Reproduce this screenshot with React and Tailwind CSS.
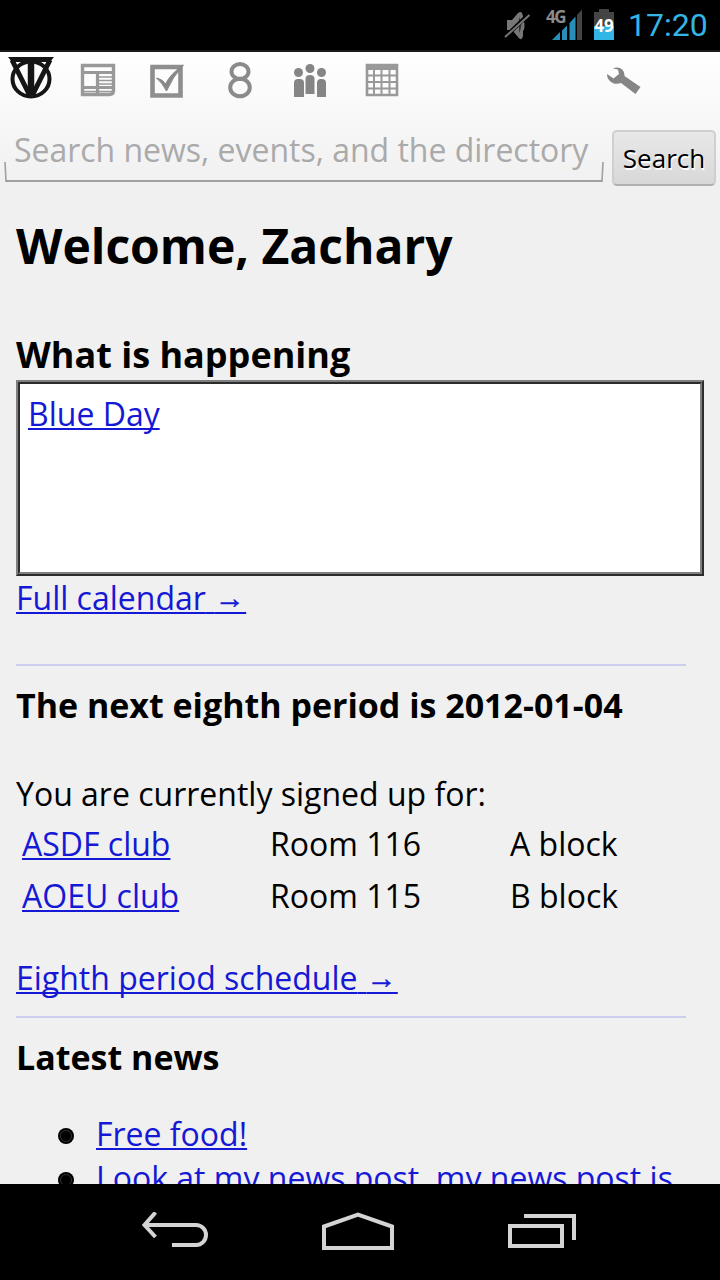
const link =
  "text-[#1518d4] underline decoration-2 underline-offset-[2px] [text-decoration-skip-ink:none]";

function Arrow() {
  return (
    <>
      <span className="tracking-[0.6px]"> </span>
      <span className="align-[2px] font-['Liberation_Serif',serif] text-[30px] leading-none tracking-[1.4px] [-webkit-text-stroke:0.5px_#1518d4]">→</span>
    </>
  );
}

function StatusBar() {
  return (
    <div className="flex h-[52px] shrink-0 items-start border-b-2 border-[#1a1a1a] bg-black">
      <svg className="ml-[504px] mt-[10px] h-[30px] w-[28px] shrink-0" viewBox="0 0 28 30">
        <path d="M3 10h5l6-7c3-2 4-1 5 3v4c2 2 2 9 0 11v5c-1 4-3 4-5 1l-6-7H3z" fill="#777" />
        <path d="M15 7v16c3-5 3-11 0-16z" fill="#333" />
        <path d="M0 28 25 4" stroke="#000" strokeWidth="4" />
        <path d="M1 27 25.500 5" stroke="#777" strokeWidth="2" />
      </svg>
      <div className="relative ml-[13px] mt-[7px] h-[34px] w-[38px] shrink-0">
        <svg className="h-[34px] w-[38px]" viewBox="0 0 38 34">
          <path d="M7 33 15 25v8zM17 23.500l5-5V33h-5zM24.500 16l6-6.500V33h-6z" fill="#2a8fb8" />
          <path d="M32 8l5-5.500V33h-5z" fill="#444" />
        </svg>
        <span className="absolute left-[1px] top-0 font-['Open_Sans',sans-serif] text-[17px] font-bold leading-[20px] tracking-[-1.5px] text-[#8b8b8b]">4G</span>
      </div>
      <div className="ml-[11px] mt-[9px] flex w-5 flex-col items-center">
        <div className="h-[3px] w-[10px] bg-[#444]" />
        <div className="flex h-7 w-5 items-center justify-center bg-linear-to-b from-[#444] from-50% to-[#33b5e5] to-50%">
          <span className="-mt-[2px] font-['Open_Sans',sans-serif] text-[17px] font-bold leading-none text-white">49</span>
        </div>
      </div>
      <span className="ml-[14px] mt-[7px] whitespace-nowrap font-[Roboto,sans-serif] text-[32px] leading-[37px] text-[#33b5e5]">17:20</span>
    </div>
  );
}

function Toolbar() {
  return (
    <div className="flex h-[78px] items-start pt-1">
      <svg className="ml-2 h-[44px] w-[46px]" viewBox="0 0 46 44" fill="none" stroke="#151515">
        <ellipse cx="23" cy="23" rx="18.500" ry="17.500" strokeWidth="4" />
        <path d="M0 1h46l-4 5H4z" fill="#151515" stroke="none" />
        <path d="M4 4 22 40M42 4 24 40" strokeWidth="5" />
        <path d="M23 3v38" strokeWidth="6.500" />
      </svg>
      <svg className="ml-[26px] mt-[7px] h-[34px] w-[36px]" viewBox="0 0 36 34" fill="none" stroke="#999">
        <path d="M2.500 2.500h31v25q0 4-4 4h-27z" strokeWidth="3.400" />
        <path d="M2 9.500h32M2 24.500h32M17.500 10v22" strokeWidth="3.200" />
        <path d="M18 14h15M18 17.500h15M18 21h15M3 28.500h30" strokeWidth="1.500" />
      </svg>
      <svg className="ml-[33px] mt-[8px] h-[34px] w-[36px]" viewBox="0 0 36 34" fill="none" stroke="#8e8e8e">
        <path d="M3.500 3h28v28.500h-28z" strokeWidth="4.600" />
        <path d="M7.500 14q6 1 9 6Q22 9 34.500 1q-11 12-17 26Q13.500 19 7.500 14z" fill="#888" stroke="#888" strokeWidth="1" />
      </svg>
      <svg className="ml-[42px] mt-[5px] h-[38px] w-[26px]" viewBox="0 0 26 38" fill="none" stroke="#8b8b8b" strokeWidth="4">
        <ellipse cx="13" cy="10.500" rx="8.500" ry="7.500" />
        <ellipse cx="13" cy="26.500" rx="9.800" ry="8.800" />
      </svg>
      <svg className="ml-[40px] mt-[7px] h-[36px] w-[34px]" viewBox="0 0 34 36" fill="#858585">
        <circle cx="5.500" cy="9.500" r="4.500" /><circle cx="17" cy="5.500" r="4.500" /><circle cx="28.500" cy="9.500" r="4.500" />
        <path d="M1 34V20q0-4 4-4h2q4 0 4 4v14zM12.500 31V16q0-4 4.500-4t4.500 4v15zM24 34V20q0-4 4-4h1q4 0 4 4v14z" />
      </svg>
      <svg className="ml-[38px] mt-[7px] h-[34px] w-[34px]" viewBox="0 0 34 34" fill="none" stroke="#999">
        <path d="M2 2h30v30H2z" strokeWidth="2.600" />
        <path d="M1 4h32" strokeWidth="6" />
        <path d="M9 6v26M16.500 6v26M24.500 6v26M2 12.500h30M2 19h30M2 25.500h30" strokeWidth="2" />
      </svg>
      <svg className="ml-[207px] mt-[10px] h-[30px] w-[36px]" viewBox="0 0 36 30" fill="#858585">
        <path d="M7 2.500C12-.5 19 3 18.500 10L34.500 21l-5 7L15 17C9 19.500 1 16 1 8l6.500 4.500 5.500-4.500-1-4.500z" />
      </svg>
    </div>
  );
}

function SearchRow() {
  return (
    <div className="flex h-14 items-start">
      <div className="relative ml-1 h-[53px] w-[600px] pl-[10px]">
        <span className="block whitespace-nowrap text-[32px] leading-[40px] tracking-[-0.02px] text-[#aaaaaa]">Search news, events, and the directory</span>
        <svg className="absolute bottom-0 left-0 h-[22px] w-[600px]" viewBox="0 0 600 22" fill="none" stroke="#a0a0a0">
          <path d="M1 1l1 19.500M599 1l-1 19.500" strokeWidth="1.600" />
          <path d="M1.500 20h597" strokeWidth="2" />
        </svg>
      </div>
      <button className="ml-2 h-14 w-[104px] whitespace-nowrap rounded-[5px] border-2 border-[#cfcfcf] border-b-[#b0b0b0] bg-linear-to-b from-[#e8e8e8] to-[#d8d8d8] text-center text-[26px] leading-[52px] text-black [text-shadow:1px_2px_0_#fff]">
        Search
      </button>
    </div>
  );
}

function Item({ children }) {
  return (
    <li className="flex h-11 items-center whitespace-nowrap">
      <span className="ml-[42px] mt-[4px] mr-[22px] flex size-4 items-center justify-center rounded-full bg-black">
        <span className="size-3 rounded-full border border-[#333]" />
      </span>
      <a className={link}>{children}</a>
    </li>
  );
}

const clubs = [
  ["ASDF club", "Room 116", "A block"],
  ["AOEU club", "Room 115", "B block"],
];

function NavBar() {
  return (
    <div className="flex h-24 shrink-0 items-start bg-black pt-7">
      <svg className="ml-[140px] h-[40px] w-[70px]" viewBox="0 0 70 40" fill="none" stroke="#d4d4d4" strokeWidth="4">
        <path d="M5 13h51a10 10 0 0 1 0 20H32" />
        <path d="M15.500 0.500 4.500 13l11 12" />
      </svg>
      <svg className="ml-[110px] h-[40px] w-[76px]" viewBox="0 0 76 40" fill="none" stroke="#d4d4d4" strokeWidth="4">
        <path d="M4 36V14.500L38 2.500l34 12V36z" />
      </svg>
      <svg className="ml-[110px] h-[40px] w-[74px]" viewBox="0 0 74 40" fill="none" stroke="#d4d4d4" strokeWidth="4">
        <path d="M4 14h52v20H4zM18 4h50v24" />
      </svg>
    </div>
  );
}

export default function App() {
  return (
    <div className="flex h-[1280px] w-[720px] flex-col overflow-hidden font-['Open_Sans','Noto_Sans',sans-serif]">
      <StatusBar />
      <div className="min-h-0 flex-1 overflow-hidden bg-[#f0f0f0] text-[32px] leading-[44px] text-black">
        <div className="bg-linear-to-b from-white to-[#f0f0f0]">
          <Toolbar />
          <SearchRow />
        </div>
        <main className="px-4">
          <h1 className="mt-[28px] whitespace-nowrap text-[48px] font-bold leading-[64px]">Welcome, Zachary</h1>
          <h2 className="mt-[53px] whitespace-nowrap text-[36px] font-bold leading-[48px]">What is happening</h2>
          <div className="mt-px h-[196px] border-2 border-b-[#2c2c2c] border-l-[#808080] border-r-[#2c2c2c] border-t-[#808080]">
            <div className="h-full border-2 border-b-[#808080] border-l-[#2c2c2c] border-r-[#808080] border-t-[#2c2c2c] bg-white px-2 pt-2">
              <a className={link}>Blue Day</a>
            </div>
          </div>
          <p className="h-11 whitespace-nowrap"><a className={link}>Full calendar<Arrow /></a></p>
          <div className="mr-[18px] mt-[44px] h-[2px] bg-[#cecfee]" />
          <h3 className="mt-[17px] h-11 whitespace-nowrap text-[34px] font-bold tracking-[-0.01px]">The next eighth period is 2012-01-04</h3>
          <p className="mt-[45px] h-11">You are currently signed up for:</p>
          <div className="mt-[6px] flex flex-col gap-2 pl-[6px]">
            {clubs.map(([name, room, block]) => (
              <div key={name} className="grid h-11 grid-cols-[248px_240px_1fr]">
                <span><a className={link}>{name}</a></span>
                <span>{room}</span>
                <span>{block}</span>
              </div>
            ))}
          </div>
          <p className="mt-[38px] h-11 whitespace-nowrap"><a className={link}>Eighth period schedule<Arrow /></a></p>
          <div className="mr-[18px] mt-[16px] h-[2px] bg-[#cecfee]" />
          <h3 className="mt-[17px] h-11 text-[34px] font-bold">Latest news</h3>
          <ul className="mt-[33px]">
            <Item>Free food!</Item>
            <Item>Look at my news post, my news post is</Item>
          </ul>
        </main>
      </div>
      <NavBar />
    </div>
  );
}
